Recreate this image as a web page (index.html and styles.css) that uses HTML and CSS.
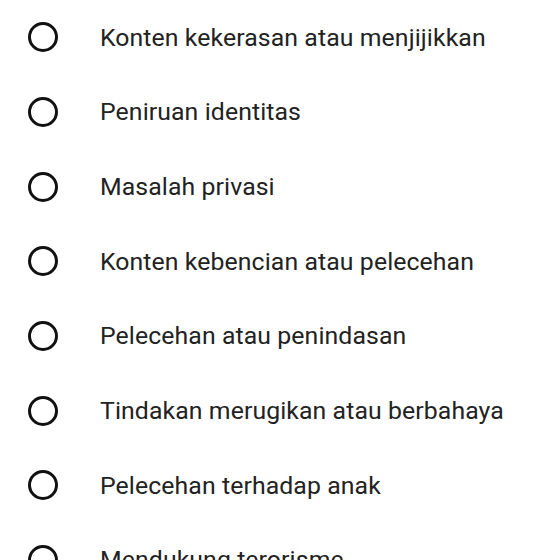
FILE: index.html
```html
<!DOCTYPE html>
<html>
<head>
<meta charset="utf-8">
<link rel="stylesheet" href="styles.css">
</head>
<body>
<ul class="list">
  <li class="row"><span class="radio"></span><span class="label">Konten kekerasan atau menjijikkan</span></li>
  <li class="row"><span class="radio"></span><span class="label">Peniruan identitas</span></li>
  <li class="row"><span class="radio"></span><span class="label">Masalah privasi</span></li>
  <li class="row"><span class="radio"></span><span class="label">Konten kebencian atau pelecehan</span></li>
  <li class="row"><span class="radio"></span><span class="label">Pelecehan atau penindasan</span></li>
  <li class="row"><span class="radio"></span><span class="label">Tindakan merugikan atau berbahaya</span></li>
  <li class="row"><span class="radio"></span><span class="label">Pelecehan terhadap anak</span></li>
  <li class="row"><span class="radio"></span><span class="label">Mendukung terorisme</span></li>
</ul>
</body>
</html>
```
FILE: styles.css
```css
html, body {
  margin: 0;
  padding: 0;
  background: #fff;
  overflow: hidden;
}
.list {
  list-style: none;
  margin: 0;
  padding: 0;
}
.row {
  display: flex;
  align-items: center;
  height: 74.67px;
  padding-left: 28px;
}
.radio {
  box-sizing: border-box;
  width: 30px;
  height: 30px;
  border: 3px solid #111;
  border-radius: 50%;
  flex: none;
}
.label {
  margin-left: 42px;
  font-family: Roboto, "Noto Sans", sans-serif;
  font-size: 24.8px;
  letter-spacing: 0.1px;
  color: #222;
  white-space: nowrap;
}
```
